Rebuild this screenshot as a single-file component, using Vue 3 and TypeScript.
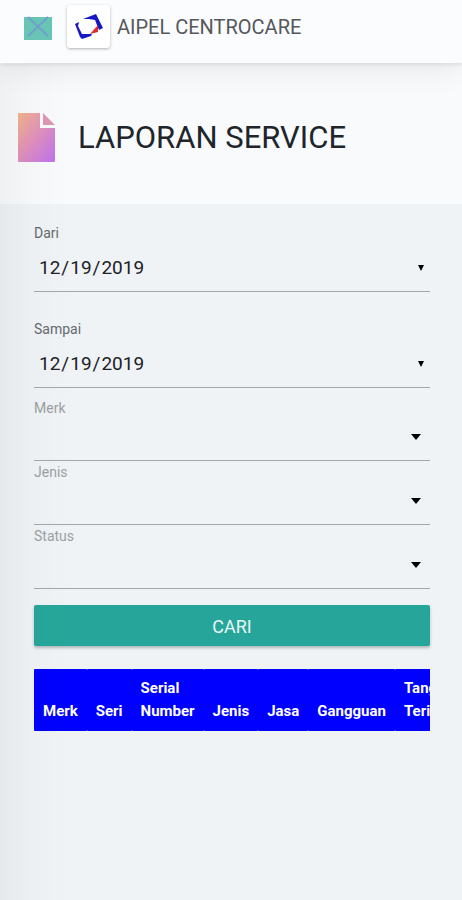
<script setup lang="ts">
import { ref } from 'vue'

interface Field {
  id: string
  label: string
  value: string
}

const dates = ref<Field[]>([
  { id: 'dari', label: 'Dari', value: '2019-12-19' },
  { id: 'sampai', label: 'Sampai', value: '2019-12-19' },
])

const choices = ref<Field[]>([
  { id: 'merk', label: 'Merk', value: '' },
  { id: 'jenis', label: 'Jenis', value: '' },
  { id: 'status', label: 'Status', value: '' },
])

const columns: string[] = ['Merk', 'Seri', 'Serial Number', 'Jenis', 'Jasa', 'Gangguan', 'Tanggal Terima']
</script>

<template>
  <div class="page">
    <header class="navbar">
      <button class="menu" type="button" aria-label="Menu">
        <svg width="28" height="25" viewBox="0 0 28 25">
          <rect x="0" y="2" width="28" height="23" fill="#68c5b3" />
          <path d="M4 2 L24 21 M24 2 L4 21" stroke="#6f9fd0" stroke-width="2" fill="none" />
        </svg>
      </button>
      <a class="brand" href="#">
        <span class="logo">
          <svg width="30" height="26" viewBox="0 0 30 26" aria-hidden="true">
            <path d="M9 5 L22 0 L29 14 L25 16 L21 6 L15 5 Z" fill="#1717c4" />
            <path d="M1 10 L5 8 L4 12 L8 20 L18 20 L17 22 L8 25 L6 23 Z" fill="#1717c4" />
            <path d="M24 11 L24 18 L16 20 Z" fill="#e22a2a" />
          </svg>
        </span>
        <span class="name">AIPEL CENTROCARE</span>
      </a>
    </header>

    <section class="heading">
      <svg class="doc" width="38" height="50" viewBox="0 0 38 50" aria-hidden="true">
        <defs>
          <linearGradient id="doc-fill" x1="0" y1="0" x2="1" y2="1">
            <stop offset="0" stop-color="#f3b58a" />
            <stop offset="0.5" stop-color="#df8fbd" />
            <stop offset="1" stop-color="#bd72ee" />
          </linearGradient>
        </defs>
        <path d="M1 0 H22 V15 H37 V48 Q37 49 36 49 H1 Q0 49 0 48 V1 Q0 0 1 0 Z" fill="url(#doc-fill)" />
        <path d="M25 0 L37 12 H25 Z" fill="#df96b4" />
      </svg>
      <h1>LAPORAN SERVICE</h1>
    </section>

    <main class="content">
      <form @submit.prevent>
        <div v-for="field in dates" :key="field.id" class="date-field">
          <label :for="field.id">{{ field.label }}</label>
          <div class="control">
            <input :id="field.id" v-model="field.value" type="date" />
            <svg class="arrow" width="6" height="6" viewBox="0 0 6 6" aria-hidden="true">
              <path d="M0 0 H6 L3 6 Z" />
            </svg>
          </div>
        </div>

        <div v-for="field in choices" :key="field.id" class="choice-field">
          <label :for="field.id">{{ field.label }}</label>
          <div class="control">
            <select :id="field.id" v-model="field.value">
              <option value=""></option>
            </select>
            <svg class="arrow" width="10" height="6" viewBox="0 0 10 6" aria-hidden="true">
              <path d="M0 0 H10 L5 6 Z" />
            </svg>
          </div>
        </div>

        <button class="submit" type="submit">CARI</button>
      </form>

      <div class="table-wrap">
        <table>
          <thead>
            <tr>
              <th v-for="column in columns" :key="column" scope="col">{{ column }}</th>
            </tr>
          </thead>
        </table>
      </div>
    </main>
  </div>
</template>

<style>
body {
  background: #eff3f6;
}
</style>

<style scoped>
.page {
  position: relative;
  min-height: 100vh;
  font-family: Roboto, sans-serif;
  color: #20242b;
}

.page::after {
  content: '';
  position: absolute;
  top: 64px;
  bottom: 0;
  left: 0;
  width: 72px;
  background: linear-gradient(to right, rgba(0, 0, 0, 0.04), rgba(0, 0, 0, 0.01) 50%, transparent);
  pointer-events: none;
}

.navbar {
  position: relative;
  display: flex;
  align-items: flex-start;
  gap: 15px;
  box-sizing: border-box;
  height: 63px;
  padding: 5px 24px 0;
  background: #fbfcfe;
  box-shadow: 0 2px 4px rgba(0, 0, 0, 0.08), 0 4px 32px rgba(0, 0, 0, 0.09);
}

.menu {
  display: flex;
  margin: 0;
  padding: 10px 0 0;
  border: 0;
  background: none;
}

.brand {
  display: flex;
  align-items: center;
  gap: 7px;
  color: #55575a;
  text-decoration: none;
}

.logo {
  display: flex;
  align-items: center;
  justify-content: center;
  width: 43px;
  height: 43px;
  border-radius: 3px;
  background: #fff;
  box-shadow: 0 1px 3px rgba(0, 0, 0, 0.3);
}

.name {
  font-size: 20px;
  line-height: 24px;
}

.heading {
  display: flex;
  align-items: flex-start;
  gap: 22px;
  padding: 50px 18px 41px;
  background: #f8fafc;
}

.doc {
  flex: none;
}

h1 {
  margin: 0;
  font-size: 31px;
  font-weight: 400;
  line-height: 50px;
}

.content {
  padding: 21px 32px 0 34px;
}

label {
  display: block;
  font-size: 14px;
  line-height: 16px;
}

.date-field {
  height: 96px;
}

.date-field label {
  color: #66696c;
}

.choice-field {
  height: 64px;
}

.choice-field label {
  color: #9c9fa1;
}

.date-field:nth-child(2) {
  height: 79px;
}

.control {
  position: relative;
}

input,
select {
  display: block;
  box-sizing: border-box;
  width: 100%;
  margin: 0;
  border: 0;
  border-bottom: 1px solid #a3a7aa;
  border-radius: 0;
  background: transparent;
  color: #202124;
  font-family: inherit;
  font-size: 19px;
  outline: 0;
  appearance: none;
}

input {
  height: 51px;
  padding: 2px 4px 0;
}

input::-webkit-calendar-picker-indicator {
  width: 20px;
  opacity: 0;
}

select {
  height: 45px;
  padding: 0 32px 0 4px;
}

.arrow {
  position: absolute;
  top: 24px;
  right: 6px;
  pointer-events: none;
}

.choice-field .arrow {
  top: 18px;
  right: 9px;
}

.submit {
  display: block;
  width: 100%;
  height: 41px;
  margin: 13px 0 0;
  padding: 0;
  border: 0;
  border-radius: 2px;
  background: #26a69a;
  box-shadow: 0 2px 3px rgba(0, 0, 0, 0.25);
  color: #e8f6f5;
  font-family: inherit;
  font-size: 18px;
  line-height: 43px;
}

.table-wrap {
  margin-top: 23px;
  overflow-x: auto;
  scrollbar-width: none;
}

table {
  width: 100%;
  border-spacing: 0;
}

th {
  padding: 8px 9px;
  border-radius: 1px;
  background: #0000fe;
  color: #fff;
  font-size: 15px;
  font-weight: 700;
  line-height: 23px;
  text-align: left;
  vertical-align: bottom;
}
</style>
